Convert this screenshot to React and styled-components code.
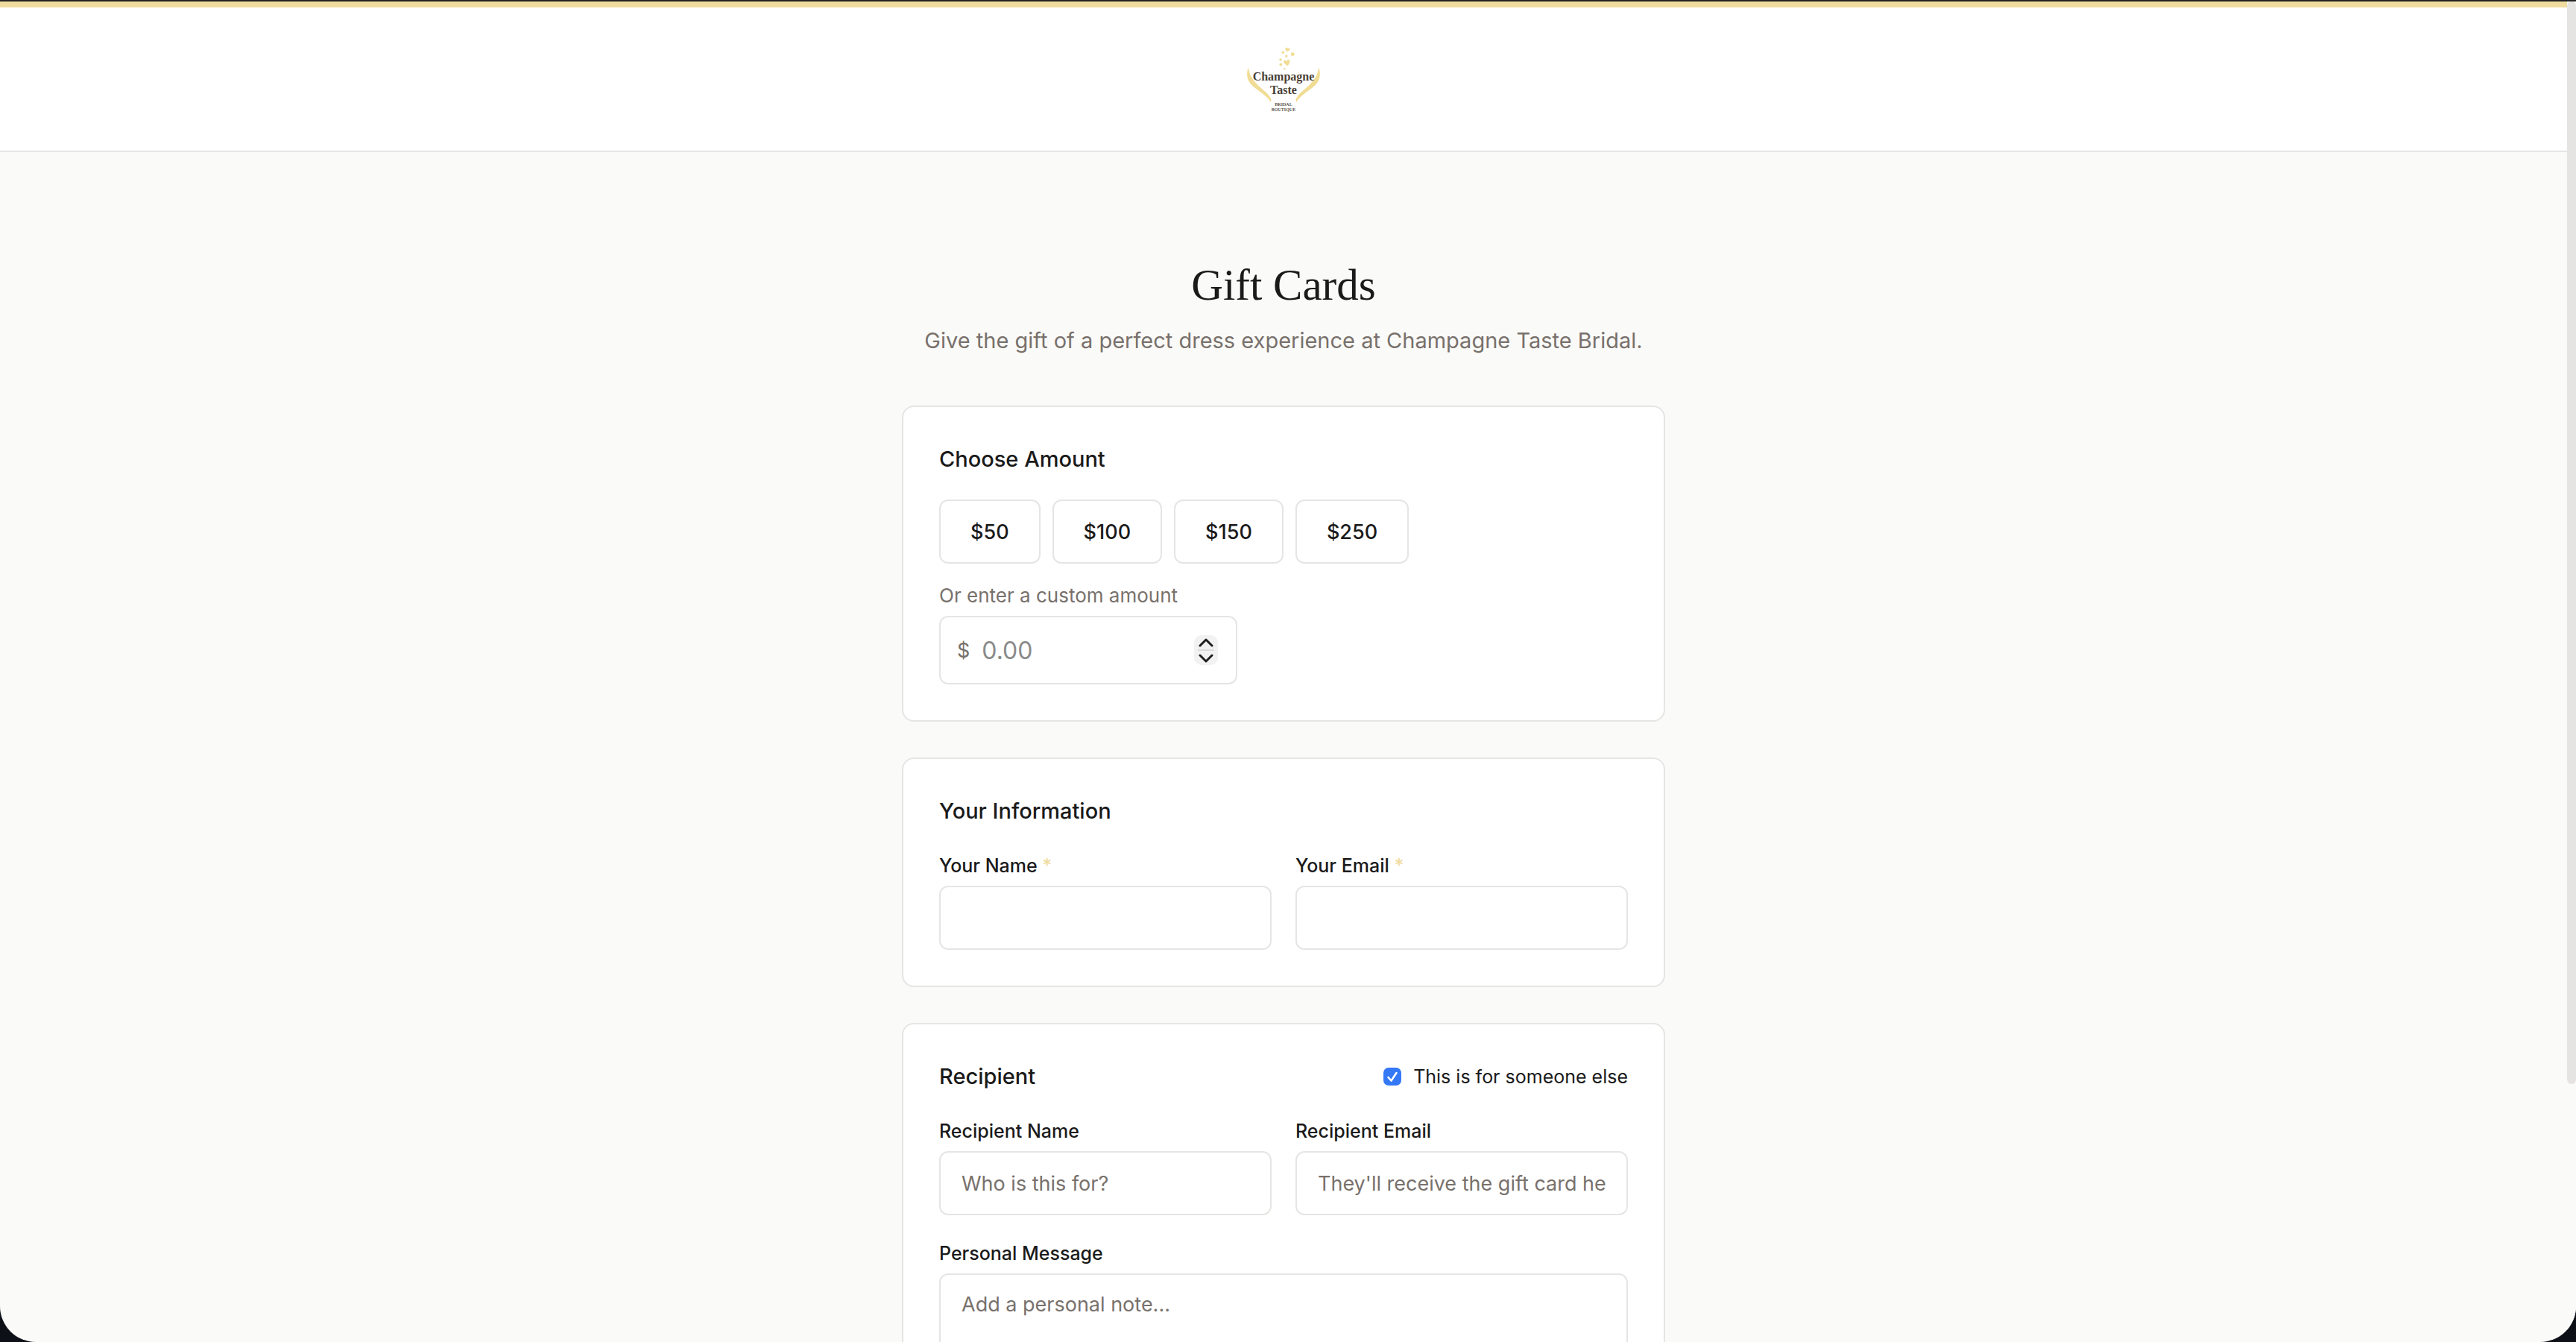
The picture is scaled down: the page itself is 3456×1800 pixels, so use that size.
import React from 'react';
import styled, { createGlobalStyle } from 'styled-components';

const GlobalStyle = createGlobalStyle`
  *,
  *::before,
  *::after {
    box-sizing: border-box;
  }

  body {
    margin: 0;
    background-color: #0d1117;
    color: #1a1a1a;
    font-family: Inter, 'Liberation Sans', sans-serif;
    font-size: 27px;
  }

  button,
  input,
  textarea {
    color: inherit;
    font: inherit;
  }
`;

const Window = styled.div`
  display: flex;
  height: 100vh;
  overflow: hidden;
  background-color: #fafaf8;
  border-top: 2px solid #222222;
  border-radius: 0 0 48px 48px;
`;

const Page = styled.div`
  flex: 1;
  min-width: 0;
  overflow: hidden;
  border-top: 8px solid #f0dc9e;
`;

const ScrollTrack = styled.div`
  width: 12px;
  background-color: #fafaf8;
`;

const ScrollThumb = styled.div`
  height: calc(81% - 4px);
  background-color: #e5e4e2;
  border-radius: 6px;
`;

const Header = styled.header`
  display: flex;
  justify-content: center;
  padding: 48px;
  background-color: #ffffff;
  border-bottom: 2px solid #e5e5e3;
`;

const LogoLink = styled.a`
  display: block;
  height: 96px;
`;

const LogoScript = styled.text`
  fill: #4a3f35;
  font-family: 'Liberation Serif', serif;
  font-size: 16px;
  font-weight: 700;
  text-anchor: middle;
`;

const LogoTagline = styled.text`
  fill: #5c534b;
  font-family: 'Liberation Serif', serif;
  font-size: 6px;
  font-weight: 700;
  text-anchor: middle;
`;

const Main = styled.main`
  max-width: 1024px;
  margin: 0 auto;
  padding: 144px 0 96px;
`;

const Intro = styled.div`
  margin-bottom: 62px;
  text-align: center;
`;

const Title = styled.h1`
  margin: 0 0 16px;
  font-family: 'Liberation Serif', serif;
  font-size: 59px;
  font-weight: 400;
  line-height: 68px;
`;

const Subtitle = styled.p`
  margin: 0;
  color: #78716c;
  font-size: 29px;
  line-height: 50px;
`;

const Form = styled.form`
  display: flex;
  flex-direction: column;
  gap: 48px;
`;

const Card = styled.section`
  padding: 48px;
  background-color: #ffffff;
  border: 2px solid #e5e5e3;
  border-radius: 16px;
`;

const CardHeader = styled.div`
  display: flex;
  align-items: center;
  justify-content: space-between;
  margin-bottom: 32px;
`;

const CardTitle = styled.h2`
  margin: 0;
  font-size: 29px;
  font-weight: 450;
  line-height: 44px;
`;

const AmountList = styled.div`
  display: flex;
  flex-wrap: wrap;
  gap: 16px;
  margin-bottom: 24px;
`;

const AmountButton = styled.button`
  height: 86px;
  padding: 0 40px;
  background-color: ${({ $selected }) => ($selected ? '#fbf5e0' : '#ffffff')};
  border: 2px solid ${({ $selected }) => ($selected ? '#f0dc9e' : '#e5e5e3')};
  border-radius: 12px;
  font-weight: 500;
  cursor: pointer;
`;

const Label = styled.label`
  display: block;
  margin-bottom: 8px;
  color: ${({ $muted }) => ($muted ? '#78716c' : 'inherit')};
  font-size: ${({ $muted }) => ($muted ? '26px' : '25px')};
  font-weight: ${({ $muted }) => ($muted ? 400 : 450)};
  line-height: 38px;
`;

const Required = styled.span`
  color: #f0dc9e;
`;

const CustomAmount = styled.div`
  display: flex;
  align-items: center;
  width: 400px;
  max-width: 100%;
  height: 92px;
  padding: 0 24px 0 22px;
  border: 2px solid #e5e5e3;
  border-radius: 12px;
`;

const Currency = styled.span`
  margin-right: 16px;
  color: #78716c;
`;

const CustomInput = styled.input`
  flex: 1;
  min-width: 0;
  padding: 0;
  background: none;
  border: none;
  outline: none;
  font-size: 32px;
  appearance: textfield;

  &::-webkit-inner-spin-button {
    display: none;
  }

  &::placeholder {
    color: #8a8a8a;
  }
`;

const Stepper = styled.div`
  display: flex;
  flex-direction: column;
  width: 32px;
  height: 40px;
  background-color: #f2f2f2;
  border-radius: 10px;
`;

const StepButton = styled.button`
  display: flex;
  flex: 1;
  align-items: center;
  justify-content: center;
  padding: 0;
  background: none;
  border: none;
  cursor: pointer;
`;

const StepDivider = styled.div`
  height: 2px;
  margin: 0 5px;
  background-color: #dcdcdc;
`;

const FieldGrid = styled.div`
  display: grid;
  grid-template-columns: 1fr 1fr;
  gap: 32px;
`;

const Field = styled.div`
  grid-column: ${({ $wide }) => ($wide ? '1 / -1' : 'auto')};
  min-width: 0;
`;

const TextInput = styled.input`
  display: block;
  width: 100%;
  height: 86px;
  padding: 20px 28px;
  background-color: #ffffff;
  border: 2px solid #e5e5e3;
  border-radius: 12px;
  outline: none;

  &::placeholder {
    color: #78716c;
  }
`;

const TextArea = styled(TextInput)`
  height: 192px;
  line-height: 40px;
  resize: none;
`;

const CheckLabel = styled.label`
  display: flex;
  align-items: center;
  gap: 16px;
  font-size: 25px;
  cursor: pointer;
`;

const CheckBoxWrap = styled.span`
  position: relative;
  width: 24px;
  height: 24px;
`;

const CheckBox = styled.input`
  display: block;
  width: 24px;
  height: 24px;
  margin: 0;
  background-color: #ffffff;
  border: 2px solid #c9c9c7;
  border-radius: 7px;
  appearance: none;

  &:checked {
    background-color: #3478f6;
    border-color: #3478f6;
  }
`;

const CheckMark = styled.svg`
  position: absolute;
  inset: 0;
  pointer-events: none;
`;

const AMOUNTS = [50, 100, 150, 250];

const Logo = () => (
  <svg width="100" height="96" viewBox="0 0 100 96" role="img" aria-label="Champagne Taste">
    <g fill="#f0dc94">
      <path d="M54.6 11.2C52.6 9.6 52 7.8 52.8 6.3C53.8 5.2 55.2 5.8 55.8 7.2C56.8 6.2 58.4 6.4 58.6 7.6C58.6 9.4 56.8 10.6 54.6 11.2Z" />
      <path d="M55.6 30.2C52.4 28.6 50 26.6 50 24.4C50.4 22.4 53 22.4 54.2 24.6C54.4 22 57 21 58.2 22.8C59 25.2 57.4 28 55.6 30.2Z" />
      <circle cx="49.3" cy="12.3" r="1.8" />
      <circle cx="62.3" cy="14.7" r="2.4" />
      <circle cx="53.7" cy="17.3" r="1.8" />
      <circle cx="46" cy="22" r="1.8" />
      <circle cx="46.3" cy="28.7" r="1.9" />
      <circle cx="51.3" cy="34.3" r="1.3" />
      <path d="M2.8 32.5C0.4 38 0.6 46 3.5 51C7.5 58.5 16 62.5 23 68.5C27.5 72.5 31 75 32.6 79C33.8 77.5 33.8 75.5 32.6 73.5C28.5 65.5 20 61.5 14 54.5C8 48 4 42 2.8 32.5Z" />
      <path d="M97.2 32.5C99.6 38 99.4 46 96.5 51C92.5 58.5 84 62.5 77 68.5C72.5 72.5 69 75 67.4 79C66.2 77.5 66.2 75.5 67.4 73.5C71.5 65.5 80 61.5 86 54.5C92 48 96 42 97.2 32.5Z" />
    </g>
    <LogoScript x="50" y="50">Champagne</LogoScript>
    <LogoScript x="50" y="68">Taste</LogoScript>
    <LogoTagline x="50" y="84">BRIDAL</LogoTagline>
    <LogoTagline x="50" y="91">BOUTIQUE</LogoTagline>
  </svg>
);

const Chevron = ({ down }) => (
  <svg
    width="20"
    height="12"
    viewBox="0 0 20 12"
    fill="none"
    stroke="#1f1f1f"
    strokeWidth="3"
    strokeLinecap="round"
    strokeLinejoin="round"
  >
    <path d={down ? 'M2 2L10 10L18 2' : 'M2 10L10 2L18 10'} />
  </svg>
);

const App = () => {
  const [amount, setAmount] = React.useState(null);
  const [custom, setCustom] = React.useState('');
  const [forSomeoneElse, setForSomeoneElse] = React.useState(true);

  const step = (delta) => {
    setAmount(null);
    setCustom(String(Math.max(0, Number(custom) + delta)));
  };

  return (
    <>
      <GlobalStyle />
      <Window>
        <Page>
          <Header>
            <LogoLink href="#">
              <Logo />
            </LogoLink>
          </Header>

          <Main>
            <Intro>
              <Title>Gift Cards</Title>
              <Subtitle>Give the gift of a perfect dress experience at Champagne Taste Bridal.</Subtitle>
            </Intro>

            <Form>
              <Card>
                <CardHeader>
                  <CardTitle>Choose Amount</CardTitle>
                </CardHeader>
                <AmountList>
                  {AMOUNTS.map(value => (
                    <AmountButton
                      key={value}
                      type="button"
                      $selected={amount === value}
                      onClick={() => setAmount(value)}
                    >
                      ${value}
                    </AmountButton>
                  ))}
                </AmountList>
                <Label htmlFor="custom-amount" $muted>Or enter a custom amount</Label>
                <CustomAmount>
                  <Currency>$</Currency>
                  <CustomInput
                    id="custom-amount"
                    type="number"
                    min="0"
                    placeholder="0.00"
                    value={custom}
                    onChange={e => setCustom(e.target.value)}
                  />
                  <Stepper>
                    <StepButton type="button" aria-label="Increase amount" onClick={() => step(1)}>
                      <Chevron />
                    </StepButton>
                    <StepDivider />
                    <StepButton type="button" aria-label="Decrease amount" onClick={() => step(-1)}>
                      <Chevron down />
                    </StepButton>
                  </Stepper>
                </CustomAmount>
              </Card>

              <Card>
                <CardHeader>
                  <CardTitle>Your Information</CardTitle>
                </CardHeader>
                <FieldGrid>
                  <Field>
                    <Label htmlFor="your-name">Your Name <Required>*</Required></Label>
                    <TextInput id="your-name" type="text" required />
                  </Field>
                  <Field>
                    <Label htmlFor="your-email">Your Email <Required>*</Required></Label>
                    <TextInput id="your-email" type="email" required />
                  </Field>
                </FieldGrid>
              </Card>

              <Card>
                <CardHeader>
                  <CardTitle>Recipient</CardTitle>
                  <CheckLabel>
                    <CheckBoxWrap>
                      <CheckBox
                        type="checkbox"
                        checked={forSomeoneElse}
                        onChange={e => setForSomeoneElse(e.target.checked)}
                      />
                      {forSomeoneElse && (
                        <CheckMark width="24" height="24" viewBox="0 0 24 24" fill="none">
                          <path
                            d="M6.5 13L10.5 17.5L17.5 7"
                            stroke="#ffffff"
                            strokeWidth="2.6"
                            strokeLinecap="round"
                            strokeLinejoin="round"
                          />
                        </CheckMark>
                      )}
                    </CheckBoxWrap>
                    This is for someone else
                  </CheckLabel>
                </CardHeader>
                {forSomeoneElse && (
                  <FieldGrid>
                    <Field>
                      <Label htmlFor="recipient-name">Recipient Name</Label>
                      <TextInput id="recipient-name" type="text" placeholder="Who is this for?" />
                    </Field>
                    <Field>
                      <Label htmlFor="recipient-email">Recipient Email</Label>
                      <TextInput
                        id="recipient-email"
                        type="email"
                        placeholder="They'll receive the gift card here"
                      />
                    </Field>
                    <Field $wide>
                      <Label htmlFor="message">Personal Message</Label>
                      <TextArea as="textarea" id="message" placeholder="Add a personal note..." />
                    </Field>
                  </FieldGrid>
                )}
              </Card>
            </Form>
          </Main>
        </Page>

        <ScrollTrack>
          <ScrollThumb />
        </ScrollTrack>
      </Window>
    </>
  );
};

export default App;
